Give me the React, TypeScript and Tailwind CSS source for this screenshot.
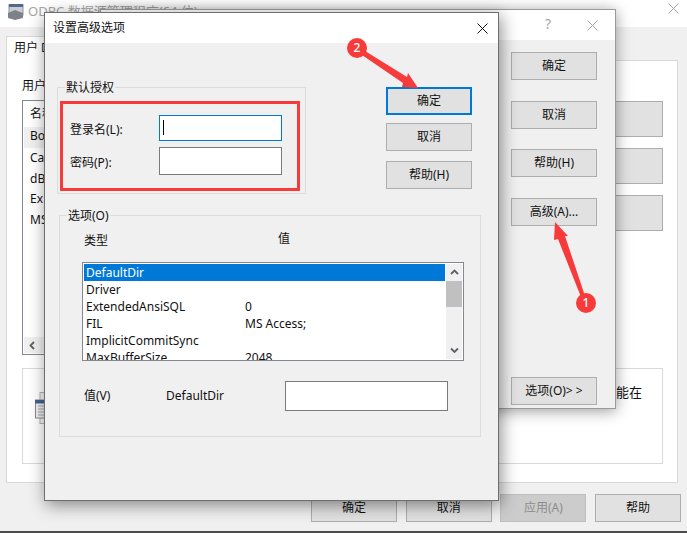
const FONT = "font-['Noto_Sans','Noto_Sans_CJK_SC',sans-serif]";

function Btn({
  label,
  className = '',
  tone = 'border border-[#adadad] bg-[#e1e1e1] text-[#111]',
}: {
  label: string;
  className?: string;
  tone?: string;
}) {
  return (
    <div className={`w-[86px] h-[28px] shrink-0 flex items-center justify-center text-[12px] ${tone} ${className}`}>
      {label}
    </div>
  );
}

function CloseIcon({ color }: { color: string }) {
  return (
    <svg width="11" height="11" viewBox="0 0 11 11" fill="none" stroke={color} strokeWidth="1">
      <path d="M0.5 0.5L10.5 10.5M10.5 0.5L0.5 10.5" />
    </svg>
  );
}

function Chevron({ dir }: { dir: 'up' | 'down' | 'left' }) {
  const d = dir === 'up' ? 'M1 6L4.5 2.5L8 6' : dir === 'down' ? 'M1 2.5L4.5 6L8 2.5' : 'M6 1L2.5 4.5L6 8';
  return (
    <svg width="9" height="9" viewBox="0 0 9 9" fill="none" stroke="#606060" strokeWidth="1.8">
      <path d={d} />
    </svg>
  );
}

const rows = [
  ['DefaultDir', ''],
  ['Driver', ''],
  ['ExtendedAnsiSQL', '0'],
  ['FIL', 'MS Access;'],
  ['ImplicitCommitSync', ''],
  ['MaxBufferSize', '2048'],
];

function BackWindow() {
  return (
    <div className="flex flex-col h-full border-b-2 border-[#4b4b4b] bg-[#f0f0f0]">
      <div className="h-[27px] shrink-0 bg-white flex items-start pt-[4px] pl-[7px] gap-[3px] text-[13px] leading-[15px] text-[#a6a6a6]">
        <svg width="18" height="16" viewBox="0 0 18 16">
          <rect x="2" y="0" width="14" height="11" fill="#c9ced6" stroke="#8a8f98" />
          <rect x="2" y="0" width="14" height="3" fill="#56688a" />
          <path d="M1 9L8 6L16 9V14L8 16L1 14Z" fill="#7d8288" />
        </svg>
        <span>ODBC 数据源管理程序(64 位)</span>
        <span className="ml-auto mr-[8px] -mt-[1px]"><CloseIcon color="#a0a0a0" /></span>
      </div>
      <div className="pl-[6px] pr-[9px] pt-[9px]">
        <div className="w-[120px] h-[25px] -mb-px relative bg-white border border-b-0 border-[#d9d9d9] pl-[7px] pt-[2px] text-[12px] text-[#111]">用户 D</div>
        <div className="h-[423px] bg-white border border-[#d9d9d9] pl-[15px] pr-[14px] pt-[16px]">
          <div className="h-[23px] text-[12px] text-[#111]">用户</div>
          <div className="flex gap-[12px] h-[255px]">
            <div className="flex-1 flex flex-col border border-[#828790] p-px text-[12px] text-[#111]">
              <div className="flex-1 pl-[6px] pt-[3px]">
                <div className="h-[22px]">名称</div>
                <div className="h-[21px] -ml-[6px] pl-[6px] bg-[#f0f0f0]">Bo</div>
                <div className="h-[21px] pt-[1px]">Ca</div>
                <div className="h-[21px] pt-[1px]">dB</div>
                <div className="h-[21px]">Ex</div>
                <div className="h-[21px]">MS</div>
              </div>
              <div className="h-[16px] bg-[#f0f0f0] flex">
                <div className="w-[17px] flex items-center justify-center"><Chevron dir="left" /></div>
              </div>
            </div>
            <div className="w-[86px] flex flex-col gap-[11px] pt-px">
              <div className="h-[36px] border border-[#adadad] bg-[#e1e1e1]" />
              <div className="h-[36px] border border-[#adadad] bg-[#e1e1e1]" />
              <div className="h-[36px] border border-[#adadad] bg-[#e1e1e1]" />
            </div>
          </div>
          <div className="mt-[13px] h-[96px] border border-[#d9d9d9] flex justify-end pt-[14px] pr-[20px] text-[13px] text-[#111]">
            <svg className="absolute left-[35px] top-[392px]" width="12" height="32" viewBox="0 0 12 32">
              <rect x="5" y="0.5" width="7" height="31" fill="#f4f4f4" stroke="#b5b5b5" />
              <rect x="0.5" y="8" width="11" height="18" fill="#f0f0f0" stroke="#8a8a8a" />
              <rect x="0" y="8" width="12" height="3.5" fill="#45618f" />
              <path d="M3 14H9M3 17H9M3 20H9M3 23H9" stroke="#a0a0a0" />
            </svg>
            能在
          </div>
        </div>
      </div>
      <div className="flex justify-end gap-[8.67px] pr-[6px] pt-[11px]">
        <Btn label="确定" />
        <Btn label="取消" />
        <Btn label="应用(A)" tone="border border-[#bfbfbf] bg-[#cccccc] text-[#8c8c8c]" />
        <Btn label="帮助" />
      </div>
    </div>
  );
}

function MiddleWindow() {
  return (
    <div className="absolute left-[100px] top-[9px] w-[516px] h-[400px] flex flex-col border border-[#9a9a9a] bg-[#f0f0f0] shadow-[0_2px_14px_rgba(0,0,0,0.4)]">
      <div className="h-[30px] shrink-0 bg-white flex items-center justify-end pr-[17px] gap-[36px] text-[14px] text-[#a8a8a8]">
        <span className="-mt-[3px]">?</span>
        <CloseIcon color="#a0a0a0" />
      </div>
      <div className="flex-1 flex flex-col items-end pr-[18px] pt-[12px] pb-[3px] gap-[20.5px]">
        <Btn label="确定" />
        <Btn label="取消" />
        <Btn label="帮助(H)" />
        <Btn label="高级(A)..." />
        <Btn label="选项(O)> >" className="mt-auto" />
      </div>
    </div>
  );
}

function FrontDialog() {
  return (
    <div className="absolute left-[44px] top-[12px] w-[455px] h-[489px] flex flex-col border border-[#6e6e6e] bg-[#f0f0f0] text-[12px] text-[#111] shadow-[2px_4px_16px_rgba(0,0,0,0.45)]">
      <div className="h-[30px] shrink-0 bg-white flex items-center justify-between pl-[8px] pr-[10px] text-[12px]">
        <span>设置高级选项</span>
        <CloseIcon color="#111" />
      </div>
      <div className="flex pl-[12px] pt-[44px]">
        <div className="relative w-[249px] h-[107px] border border-[#dcdcdc] pl-[101px] pt-[27px]">
          <span className="absolute left-[7px] -top-[9px] px-px bg-[#f0f0f0]">默认授权</span>
          <div className="h-[26px] w-[123px] border border-[#0078d7] bg-white pl-[3px] pt-[4px] mb-[6px]">
            <div className="w-px h-[15px] bg-black" />
          </div>
          <div className="h-[28px] w-[123px] border border-[#7a7a7a] bg-white" />
          <span className="absolute left-[12px] top-[33px]">登录名(L):</span>
          <span className="absolute left-[12px] top-[66px]">密码(P):</span>
        </div>
        <div className="flex flex-col gap-[8px] ml-[80px]">
          <Btn label="确定" tone="border-2 border-[#0078d7] bg-[#e1e1e1] text-[#111]" />
          <Btn label="取消" />
          <Btn label="帮助(H)" className="mt-[2px]" />
        </div>
      </div>
      <div className="relative ml-[14px] mt-[21px] w-[422px] h-[222px] border border-[#dcdcdc] pl-[22px] pt-[16px]">
        <span className="absolute left-[7px] -top-[9px] px-px bg-[#f0f0f0]">选项(O)</span>
        <div className="flex h-[30px] pl-[2px]">
          <span className="w-[194px]">类型</span>
          <span className="-mt-[2px]">值</span>
        </div>
        <div className="w-[382px] h-[99px] border border-[#828790] bg-white p-px flex overflow-hidden">
          <div className="flex-1">
            {rows.map(([name, value], i) => (
              <div key={name} className={`h-[17px] flex items-center pl-[2px] ${i === 0 ? 'bg-[#0078d7] text-white' : ''}`}>
                <span className="w-[159px]">{name}</span>
                <span>{value}</span>
              </div>
            ))}
          </div>
          <div className="w-[16px] ml-px bg-[#f0f0f0] flex flex-col items-center">
            <div className="h-[17px] flex items-center"><Chevron dir="up" /></div>
            <div className="w-full h-[26px] bg-[#c0c0c0]" />
            <div className="flex-1" />
            <div className="h-[17px] flex items-center"><Chevron dir="down" /></div>
          </div>
        </div>
        <div className="flex items-center mt-[20px] pl-[2px]">
          <span className="w-[82px]">值(V)</span>
          <span className="w-[119px]">DefaultDir</span>
          <div className="w-[163px] h-[30px] border border-[#7a7a7a] bg-white" />
        </div>
      </div>
    </div>
  );
}

function Marker({ n, className }: { n: string; className: string }) {
  return (
    <div className={`absolute w-[20px] h-[20px] rounded-full bg-[#f73a3a] text-white text-[12px] font-medium flex items-center justify-center ${className}`}>
      {n}
    </div>
  );
}

export default function App() {
  return (
    <div className={`relative w-[687px] h-[533px] overflow-hidden ${FONT}`}>
      <BackWindow />
      <MiddleWindow />
      <FrontDialog />
      {/* red marks drawn over the screenshot */}
      <div className="absolute left-[60px] top-[101px] w-[240px] h-[90px] border-[3px] border-[#f73a3a]" />
      <svg className="absolute left-0 top-0" width="687" height="533" viewBox="0 0 687 533" fill="#f73a3a">
        <polygon points="555,222 568,236 565,236 585,296 581,297 558,239 554,240" />
        <polygon points="418,88 402,87 403,83 362,55 365,51 407,77 408,73" />
      </svg>
      <Marker n="1" className="left-[576px] top-[293px]" />
      <Marker n="2" className="left-[347px] top-[38px]" />
    </div>
  );
}
